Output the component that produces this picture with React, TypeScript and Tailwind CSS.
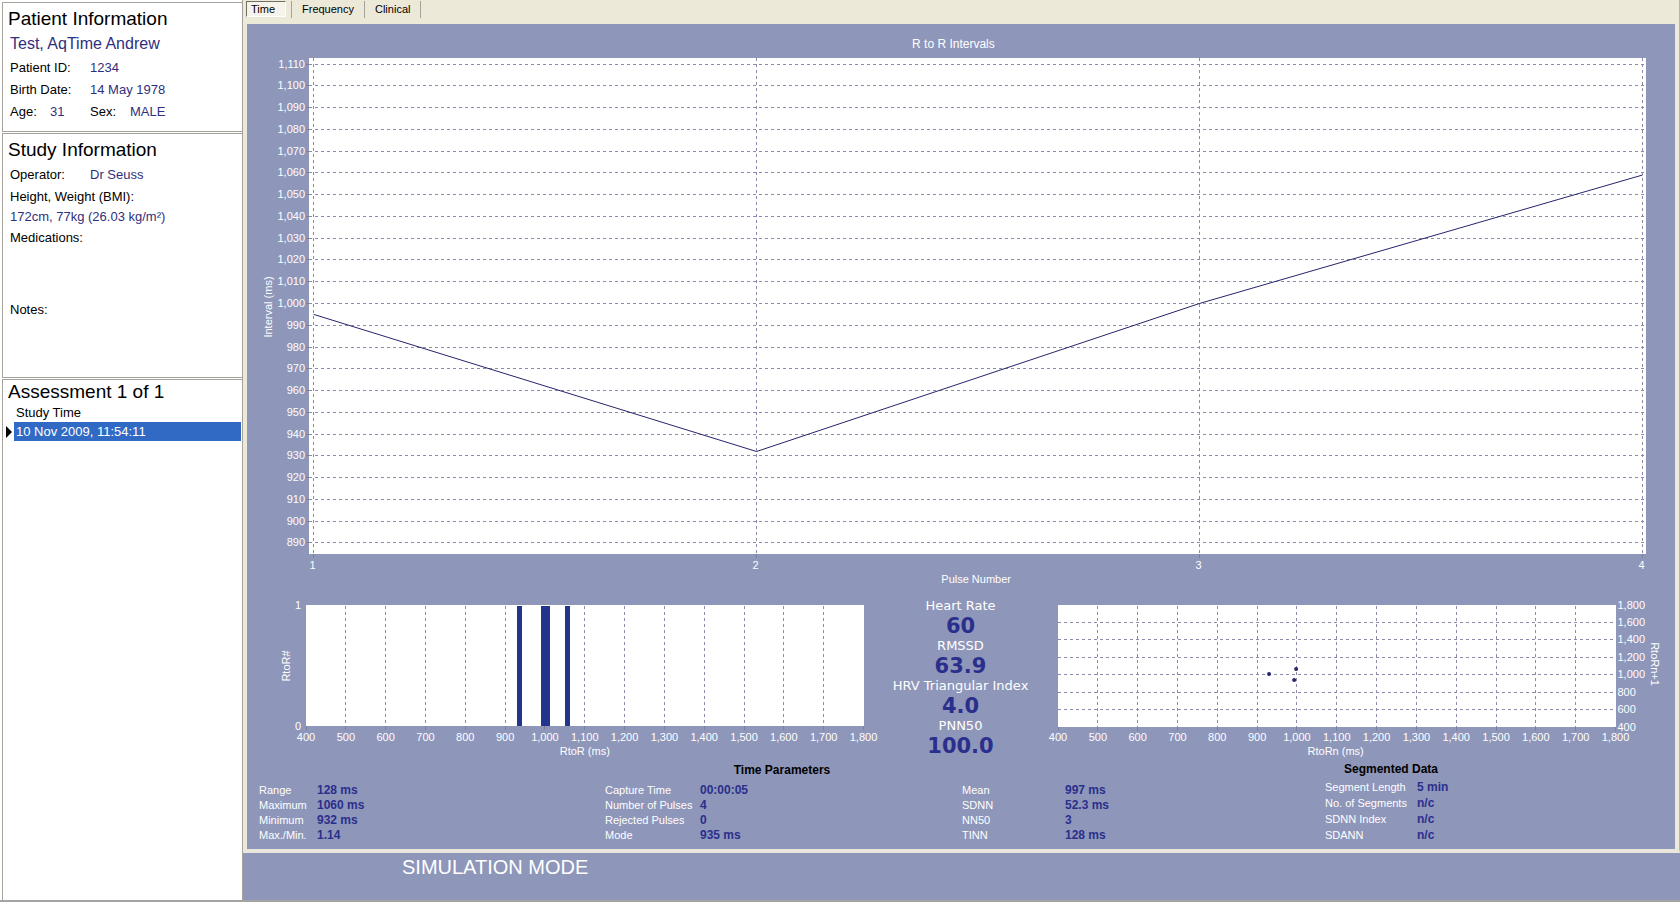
import { useState, type ReactNode } from 'react';

const GRID = '#8b8bab';
const TICK = '#7880a3';
const NAVY = '#24246a';

const range = (from: number, to: number, step: number) => {
  const out: number[] = [];
  for (let v = from; v <= to; v += step) out.push(v);
  return out;
};

const fmt = (v: number) => v.toLocaleString('en-US');

function Plot({ height, label, children }: { height: number; label: string; children: ReactNode }) {
  return (
    <svg
      role="img"
      aria-label={label}
      width="100%"
      height={height}
      className="block overflow-visible text-[11px]"
      fill="white"
      shapeRendering="crispEdges"
    >
      <rect width="100%" height={height} fill="white" />
      {children}
    </svg>
  );
}

const PULSES = [995, 932, 1000, 1059];

function IntervalChart() {
  const x = (pulse: number) => `${0.34 + ((pulse - 1) * 99.4) / 3}%`;
  const y = (ms: number) => 6 + (1110 - ms) * 2.177;
  return (
    <Plot height={496} label="R to R Intervals">
      <text x="48.2%" y={-10} textAnchor="middle" className="text-[12px]">R to R Intervals</text>
      {range(890, 1110, 10).map((v) => {
        const py = Math.floor(y(v)) + 0.5;
        return (
          <g key={v}>
            <line x1="0" x2="100%" y1={py} y2={py} stroke={GRID} strokeDasharray="3 3" />
            <line x1={-3} x2="0" y1={py} y2={py} stroke={TICK} />
            <text x={-4} y={py + 3} textAnchor="end">{fmt(v)}</text>
          </g>
        );
      })}
      {PULSES.map((_, i) => (
        <g key={i}>
          <line x1={x(i + 1)} x2={x(i + 1)} y1={0} y2={496} stroke={GRID} strokeDasharray="3 3" />
          <line x1={x(i + 1)} x2={x(i + 1)} y1={496} y2={500} stroke={TICK} />
          <text x={x(i + 1)} y={511} dx={-1} textAnchor="middle">{i + 1}</text>
        </g>
      ))}
      {PULSES.slice(1).map((v, i) => (
        <line
          key={i}
          x1={x(i + 1)}
          y1={y(PULSES[i])}
          x2={x(i + 2)}
          y2={y(v)}
          stroke={NAVY}
          shapeRendering="auto"
        />
      ))}
      <text transform="translate(-37 249) rotate(-90)" textAnchor="middle">Interval (ms)</text>
      <text x="49.9%" y={525} textAnchor="middle">Pulse Number</text>
    </Plot>
  );
}

const msX = (ms: number) => `${(ms - 400) / 14}%`;

function MsAxis({ height }: { height: number }) {
  return (
    <>
      {range(400, 1800, 100).map((v) => (
        <g key={v}>
          {v > 400 && v < 1800 && (
            <line x1={msX(v)} x2={msX(v)} y1={1} y2={height} stroke={GRID} strokeDasharray="3 3" />
          )}
          <line x1={msX(v)} x2={msX(v)} y1={height} y2={height + 4} stroke={TICK} />
          <text x={msX(v)} y={136} textAnchor="middle">{fmt(v)}</text>
        </g>
      ))}
    </>
  );
}

function Histogram() {
  return (
    <Plot height={121} label="RtoR histogram">
      <MsAxis height={121} />
      <rect x={msX(930)} y={1} width={5} height={120} fill="#22348c" />
      <rect x={msX(989)} y={1} width={9} height={120} fill="#22348c" />
      <rect x={msX(1050)} y={1} width={5} height={120} fill="#22348c" />
      <text x={-5} y={4} textAnchor="end">1</text>
      <text x={-5} y={125} textAnchor="end">0</text>
      <text transform="translate(-16 61) rotate(-90)" textAnchor="middle">RtoR#</text>
      <text x="50%" y={150} textAnchor="middle">RtoR (ms)</text>
    </Plot>
  );
}

const POINTS = [
  [930, 69],
  [993, 75],
  [998, 64],
];

function ScatterPlot() {
  return (
    <Plot height={122} label="RtoRn against RtoRn+1">
      <MsAxis height={122} />
      {range(400, 1800, 200).map((v) => {
        const py = Math.floor(((1800 - v) * 122) / 1400) + 0.5;
        return (
          <g key={v}>
            {v > 400 && v < 1800 && (
              <line x1="0" x2="100%" y1={py} y2={py} stroke={GRID} strokeDasharray="3 3" />
            )}
            <text x="100%" dx={2} y={py + 3}>{fmt(v)}</text>
          </g>
        );
      })}
      {POINTS.map(([ms, y]) => (
        <circle key={ms} cx={msX(ms)} cy={y} r={2} fill={NAVY} shapeRendering="auto" />
      ))}
      <svg x="100%" className="overflow-visible">
        <text transform="translate(35 59) rotate(90)" textAnchor="middle">RtoRn+1</text>
      </svg>
      <text x="49.8%" y={150} textAnchor="middle">RtoRn (ms)</text>
    </Plot>
  );
}

function Metric({ name, value }: { name: string; value: string }) {
  return (
    <div className="flex h-10 flex-col items-center whitespace-nowrap">
      <dt className="text-[13px] leading-4 text-white">{name}</dt>
      <dd className="text-[21px] leading-[25px] font-bold text-[#2b2f8c]">{value}</dd>
    </div>
  );
}

function Params({ rows, first, line }: { rows: [string, string][]; first: string; line: string }) {
  return (
    <table className="self-start">
      <tbody>
        {rows.map(([name, value]) => (
          <tr key={name} className={line}>
            <th scope="row" className={`${first} p-0 text-left text-[11px] font-normal whitespace-nowrap text-white`}>
              {name}
            </th>
            <td className="p-0 text-[12px] font-bold whitespace-nowrap text-[#2b2f8c]">{value}</td>
          </tr>
        ))}
      </tbody>
    </table>
  );
}

function Heading({ children }: { children: ReactNode }) {
  return <h2 className="text-[19px] leading-6 text-black">{children}</h2>;
}

function Sidebar() {
  const panel = 'border-t border-l border-[#a5a39b] bg-white';
  return (
    <aside className="flex w-[243px] shrink-0 flex-col gap-px border-r border-[#a5a39b] bg-white pt-[2px] pl-[2px] text-[13px] text-black">
      <section className={`${panel} h-[130px] border-b pt-1 pl-[5px]`}>
        <Heading>Patient Information</Heading>
        <p className="pl-[2px] text-[16px] leading-[26px] text-[#2f2f7d]">Test, AqTime Andrew</p>
        <dl className="pl-[2px] leading-[22px]">
          <div className="flex">
            <dt className="w-20">Patient ID:</dt>
            <dd className="text-[#2f2f7d]">1234</dd>
          </div>
          <div className="flex">
            <dt className="w-20">Birth Date:</dt>
            <dd className="text-[#2f2f7d]">14 May 1978</dd>
          </div>
          <div className="flex">
            <dt className="w-10">Age:</dt>
            <dd className="w-10 text-[#2f2f7d]">31</dd>
            <dt className="w-10">Sex:</dt>
            <dd className="text-[#2f2f7d]">MALE</dd>
          </div>
        </dl>
      </section>
      <section className={`${panel} h-[245px] border-b pt-1 pl-[5px]`}>
        <Heading>Study Information</Heading>
        <dl className="pt-[2px] pl-[2px] leading-[22px]">
          <div className="flex">
            <dt className="w-20">Operator:</dt>
            <dd className="text-[#2f2f7d]">Dr Seuss</dd>
          </div>
          <dt>Height, Weight (BMI):</dt>
          <dd className="leading-[18px] text-[#2f2f7d]">172cm, 77kg (26.03 kg/m²)</dd>
          <dt className="h-[73px] pt-px">Medications:</dt>
          <dt>Notes:</dt>
        </dl>
      </section>
      <section className={`${panel} flex-1`}>
        <div className="pl-[5px]">
          <Heading>Assessment 1 of 1</Heading>
        </div>
        <table className="w-full">
          <thead>
            <tr>
              <td className="w-[11px] p-0" />
              <th scope="col" className="p-0 pl-[2px] text-left leading-[18px] font-normal">Study Time</th>
            </tr>
          </thead>
          <tbody>
            <tr aria-selected="true">
              <td className="p-0">
                <svg width="11" height="12" className="block">
                  <path d="M3 0v12l6-6z" />
                </svg>
              </td>
              <td className="border-r border-white bg-[#316ac5] p-0 pl-[2px] leading-[19px] text-white">
                10 Nov 2009, 11:54:11
              </td>
            </tr>
          </tbody>
        </table>
      </section>
    </aside>
  );
}

const TABS = ['Time', 'Frequency', 'Clinical'];

function Tabs() {
  const [active, setActive] = useState('Time');
  return (
    <nav role="tablist" className="flex h-[23px] items-start text-[11px] leading-4 text-black">
      {TABS.map((tab) => (
        <div key={tab} className="flex h-[17px] border-r border-[#a5a39b] px-[5px] first:pr-[5px] first:pl-0">
          <button
            role="tab"
            type="button"
            aria-selected={tab === active}
            onClick={() => setActive(tab)}
            className={
              tab === active
                ? 'h-4 w-10 border border-t-[#716f64] border-r-white border-b-white border-l-[#716f64] bg-[#f5f3ea] pr-[6px] leading-[15px]'
                : 'h-4 px-[5px] leading-[15px]'
            }
          >
            {tab}
          </button>
        </div>
      ))}
    </nav>
  );
}

export default function App() {
  return (
    <div className="flex min-h-screen border-b-2 border-[#a3a3a3] bg-[#8e96ba] font-['Liberation_Sans',Arial,sans-serif]">
      <Sidebar />
      <main className="flex min-w-0 flex-1 flex-col">
        <div className="border-r border-b-4 border-r-[#b5b5a8] border-b-[#e9e7dc] bg-[#ece9d8] pt-px pr-1 pl-[3px]">
          <Tabs />
          <div className="ml-px bg-[#8e96ba]">
            <div className="h-[547px] pt-[34px] pr-[29px] pl-[62px]">
              <IntervalChart />
            </div>
            <div className="grid h-[158px] grid-cols-[1fr_194px_1fr] pt-[34px] pr-[60px] pl-[59px]">
              <Histogram />
              <dl className="-mt-[7px] font-['DejaVu_Sans',Verdana,sans-serif]">
                <Metric name="Heart Rate" value="60" />
                <Metric name="RMSSD" value="63.9" />
                <Metric name="HRV Triangular Index" value="4.0" />
                <Metric name="PNN50" value="100.0" />
              </dl>
              <ScatterPlot />
            </div>
            <div className="flex h-[120px] pt-8">
              <section className="flex-[1070]">
                <h3 className="text-center text-[12px] leading-[18px] font-bold text-black">Time Parameters</h3>
                <div className="grid grid-cols-[346fr_357fr_355fr] pt-1 pl-3">
                  <Params
                    first="w-[58px]"
                    line="h-[15px] leading-[15px]"
                    rows={[
                      ['Range', '128 ms'],
                      ['Maximum', '1060 ms'],
                      ['Minimum', '932 ms'],
                      ['Max./Min.', '1.14'],
                    ]}
                  />
                  <Params
                    first="w-[95px]"
                    line="h-[15px] leading-[15px]"
                    rows={[
                      ['Capture Time', '00:00:05'],
                      ['Number of Pulses', '4'],
                      ['Rejected Pulses', '0'],
                      ['Mode', '935 ms'],
                    ]}
                  />
                  <Params
                    first="w-[103px]"
                    line="h-[15px] leading-[15px]"
                    rows={[
                      ['Mean', '997 ms'],
                      ['SDNN', '52.3 ms'],
                      ['NN50', '3'],
                      ['TINN', '128 ms'],
                    ]}
                  />
                </div>
              </section>
              <section className="flex-[358]">
                <h3 className="w-[148px] text-center text-[12px] leading-4 font-bold text-black">Segmented Data</h3>
                <div className="flex pt-[2px] pl-2">
                  <Params
                    first="w-[92px]"
                    line="h-4 leading-4"
                    rows={[
                      ['Segment Length', '5 min'],
                      ['No. of Segments', 'n/c'],
                      ['SDNN Index', 'n/c'],
                      ['SDANN', 'n/c'],
                    ]}
                  />
                </div>
              </section>
            </div>
          </div>
        </div>
        <p className="pt-[2px] pl-[159px] text-[20px] leading-6 text-white">SIMULATION MODE</p>
      </main>
    </div>
  );
}
